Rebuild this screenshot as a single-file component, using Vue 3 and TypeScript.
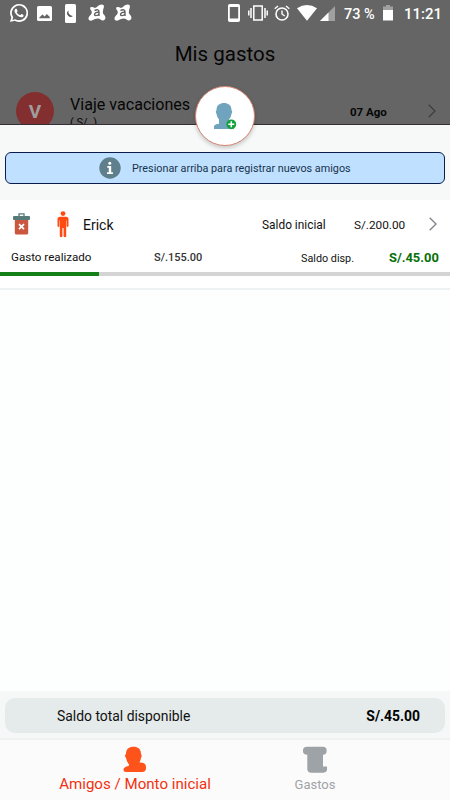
<script setup lang="ts">
interface Friend {
  name: string
  initial: string
  spent: string
  available: string
  spentPercent: number
}

const friends: Friend[] = [
  { name: 'Erick', initial: 'S/.200.00', spent: 'S/.155.00', available: 'S/.45.00', spentPercent: 22 },
]
const total = 'S/.45.00'
</script>

<template>
  <div class="screen">
    <header class="backdrop">
      <div class="status">
        <svg class="st-wa" width="18" height="18" viewBox="0 0 24 24"><path fill="#fff" d="M17.5 14.4c-.3-.15-1.76-.87-2.03-.97-.27-.1-.47-.15-.67.15s-.77.97-.94 1.16c-.17.2-.35.22-.64.08-.3-.15-1.26-.46-2.39-1.48-.88-.79-1.48-1.76-1.65-2.06-.17-.3 0-.46.13-.6.13-.14.3-.35.45-.52.15-.18.2-.3.3-.5.1-.2.05-.37-.03-.52-.07-.15-.67-1.61-.91-2.2-.24-.59-.49-.51-.67-.52h-.57c-.2 0-.52.07-.79.37S6 7.86 6 9.27s1.07 2.88 1.21 3.08c.15.2 2.1 3.2 5.08 4.49.71.3 1.26.49 1.69.62.71.23 1.36.2 1.87.12.57-.08 1.76-.72 2-1.41.25-.7.25-1.29.18-1.42-.08-.12-.27-.2-.57-.35zM12 0A12 12 0 0 0 1.7 18L0 24l6.200-1.600A12 12 0 1 0 12 0zm0 21.600a9.700 9.700 0 0 1-5-1.400l-3.700 1 1-3.600A9.700 9.700 0 1 1 12 21.600z" /></svg>
        <svg class="st-img" width="15" height="15" viewBox="0 0 15 15"><path fill="#fff" fill-rule="evenodd" d="M1.500 0h12Q15 0 15 1.500v12q0 1.500-1.500 1.500h-12Q0 15 0 13.500v-12Q0 0 1.500 0zM2.300 12.300h10.500V11L9.800 8 7.700 10.500 5.500 8.500 2.300 11.500z" /></svg>
        <svg class="st-moon" width="11" height="19" viewBox="0 0 11 19"><rect width="11" height="19" rx="1.500" fill="#fff" /><path d="M3.500 6.500A3.300 3.300 0 1 0 8 12 4.500 4.500 0 0 1 3.500 6.500z" fill="#555" /></svg>
        <svg v-for="n in 2" :key="n" class="st-av" width="18" height="18" viewBox="0 0 18 18"><path d="M7 4C9.500 3.500 10 1 12.500.7Q16 0 16 2.500C15.500 5 14.500 7 15 9.500Q18.500 13 17 15.200Q15 17.500 12.500 15.500C11 14 9 14.300 7 15C5 16 3 17.500 1 16Q-.5 14 2 11.500C4 9.500 4 8 3.500 7Q1 4 3 3Q5 2.800 7 4z" fill="#fff" /><path d="M6.500 6.500Q11 4.500 11 8V12M11 8.400C6.500 7.700 5.400 11.300 7.700 11.600Q10 11.600 11 10" fill="none" stroke="#626262" stroke-width="1.400" /></svg>
        <svg class="st-phone" width="12" height="18" viewBox="0 0 12 18"><path fill="#fff" fill-rule="evenodd" d="M1.800 0h8.400Q12 0 12 1.800v14.400q0 1.800-1.800 1.800H1.800Q0 18 0 16.200V1.800Q0 0 1.800 0zM1.800 3v11.500h8.400V3z" /></svg>
        <svg class="st-vib" width="20" height="16" viewBox="0 0 20 16"><path d="M5.800 1h8.400v14H5.800zM3 3v10M17 3v10M.8 5.500v5M19.200 5.500v5" fill="none" stroke="#fff" stroke-width="1.500" /></svg>
        <svg class="st-alarm" width="16" height="16" viewBox="0 0 16 16"><circle cx="8" cy="9" r="6" fill="none" stroke="#fff" stroke-width="1.600" /><path d="M.7 3.800 4 1M15.300 3.800 12 1M8 5.500V9l2.700 2" fill="none" stroke="#fff" stroke-width="1.400" /></svg>
        <svg class="st-wifi" width="20" height="16" viewBox="0 0 20 16"><path d="M0 3.300Q10-3.200 20 3.300L10 15.800z" fill="#fff" /></svg>
        <svg class="st-sig" width="15" height="15" viewBox="0 0 15 15"><path d="M15 0v15H0z" fill="#a0a0a0" /><path d="M8.500 6.500V15H0z" fill="#fff" /></svg>
        <span class="st-pct">73 %</span>
        <svg class="st-bat" width="10" height="16" viewBox="0 0 10 16"><path d="M0 1.500h3V0h4v1.500h3V5H0z" fill="#a0a0a0" /><path d="M0 5h10v10.500H0z" fill="#fff" /></svg>
        <span class="st-time">11:21</span>
      </div>
      <h1 class="title">Mis gastos</h1>
      <div class="trip">
        <div class="avatar">V</div>
        <div class="trip-info">
          <div class="trip-name">Viaje vacaciones</div>
          <div class="trip-sub">( S/. )</div>
        </div>
        <div class="trip-date">07 Ago</div>
        <svg class="trip-chev" width="8" height="14" viewBox="0 0 8 14"><path d="m.7.8 6.300 6.200-6.300 6.200" fill="none" stroke="#3b3d40" stroke-width="1.200" /></svg>
      </div>
    </header>

    <button class="add" aria-label="Registrar amigo">
      <svg width="26" height="28" viewBox="0 0 26 28">
        <path d="M3.500 8C3.500 3 7 1 11 1s7.500 2 7.500 7q1.500 1.500 0 4-.5 3.500-2.500 5.500V21q5 1 5 6H1v-3q1-2 5-2.300V17.500Q4 15.500 3.500 12 2 9.500 3.500 8z" fill="#6fa3be" />
        <circle cx="18.300" cy="22.300" r="4.900" fill="#12a33c" /><path d="M15.300 22.300h6M18.300 19.300v6" stroke="#fff" stroke-width="1.500" />
      </svg>
    </button>

    <section class="hint-area">
      <div class="hint">
        <svg width="22" height="22" viewBox="0 0 22 22"><circle cx="11" cy="11" r="10.700" fill="#5e7f8b" /><circle cx="10.800" cy="6.200" r="1.500" fill="#fff" /><path d="M8.300 9h3.900v6.300h1.700V17H8v-1.700h1.800v-4.600H8.300z" fill="#fff" /></svg>
        <span>Presionar arriba para registrar nuevos amigos</span>
      </div>
    </section>

    <main class="list">
      <article v-for="friend in friends" :key="friend.name" class="friend">
        <div class="row-main">
          <svg class="trash" width="17" height="22" viewBox="0 0 17 22"><path d="M6 3.500V.8h5v2.700" fill="none" stroke="#557a78" stroke-width="1.300" /><rect y="3" width="17" height="4" rx="1" fill="#557a78" /><path d="M1.800 7h13.400v13q0 1.500-1.500 1.500H3.300q-1.500 0-1.500-1.500z" fill="#cb5741" /><path d="m6 11.200 5 5m0-5-5 5" stroke="#fff" stroke-width="1.700" /></svg>
          <svg class="person" width="12" height="27" viewBox="0 0 12 27"><circle cx="6" cy="2.600" r="2.400" fill="#ff4a12" /><path d="M3 5.700h6q2.500 0 2.500 2.500v7q-.9 1.500-1.800 0V9.500h-.5v16q-1.300 1.500-2.600 0V17h-1.200v8.500q-1.300 1.500-2.600 0v-16h-.5v5.700q-.9 1.500-1.800 0v-7Q.5 5.700 3 5.700z" fill="#ff4a12" /></svg>
          <span class="name">{{ friend.name }}</span>
          <span class="initial-label">Saldo inicial</span>
          <span class="initial-value">{{ friend.initial }}</span>
          <svg class="chev" width="8" height="14" viewBox="0 0 8 14"><path d="m.7.8 6.300 6.200-6.300 6.200" fill="none" stroke="#7c8188" stroke-width="1.300" /></svg>
        </div>
        <div class="row-sub">
          <span class="spent-label">Gasto realizado</span>
          <span class="spent-value">{{ friend.spent }}</span>
          <span class="avail-label">Saldo disp.</span>
          <span class="avail-value">{{ friend.available }}</span>
        </div>
        <div class="bar"><div class="fill" :style="{ width: friend.spentPercent + '%' }"></div></div>
      </article>
    </main>

    <section class="total-area">
      <div class="total"><span class="total-label">Saldo total disponible</span><span class="total-value">{{ total }}</span></div>
    </section>

    <nav class="tabs">
      <div class="tab active">
        <svg width="24" height="27" viewBox="0 0 24 27"><path d="M3 8C3 3 6 .7 10.500.7S18 3 18 8q1.300 1.500 0 4-.5 2.500-1.500 4.500 6.500-.5 6.500 4.500v1q0 4-4 4H3q-2.500 0-2.500-2.500 0-2.500 5-3.500.8-.3.500-1.500Q3.800 16 3 12 1 9.500 3 8z" fill="#ff531c" /></svg>
        <span class="tab-friends">Amigos / Monto inicial</span>
      </div>
      <div class="tab">
        <svg width="24" height="27" viewBox="0 0 24 27"><path d="M4 .7h16q3.600 0 3.600 3.600v1.200q0 3-3.600 3.300V20.500h4.200v2.200q0 4-4 4H8.500q-4.200 0-4.200-4V8.800Q0 8.500 0 5.500V4.300Q0 .7 4 .7z" fill="#9ea3a7" /></svg>
        <span class="tab-expenses">Gastos</span>
      </div>
    </nav>
  </div>
</template>

<style>
body { margin: 0; }
</style>

<style scoped>
* { box-sizing: border-box; }
.screen { position: relative; width: 450px; height: 800px; display: flex; flex-direction: column; overflow: hidden; background: #fdfefe; font-family: Roboto, "Liberation Sans", sans-serif; color: #111; white-space: nowrap; }
svg { display: block; flex: none; }
.backdrop { height: 125px; flex: none; overflow: hidden; background: #656565; border-bottom: 1px solid #352e32; color: #050505; }
.status { height: 26px; display: flex; align-items: center; color: #fff; }
.st-wa { margin-left: 10px; }
.st-img { margin-left: 9px; }
.st-moon { margin-left: 13px; }
.st-av { margin-left: 12px; }
.st-av + .st-av { margin-left: 8px; }
.st-phone { margin-left: 96px; }
.st-vib { margin-left: 8px; }
.st-alarm { margin-left: 6px; }
.st-wifi { margin-left: 7px; }
.st-sig { margin-left: 3px; }
.st-pct { width: 40px; padding: 2px 0 0 9px; font-size: 14.500px; font-weight: 500; }
.st-bat { margin-left: 8px; }
.st-time { margin-left: 11px; padding-top: 2px; font-size: 15px; font-weight: 500; }
.title { margin: 13px 0 0; height: 29px; line-height: 30px; text-align: center; font-size: 20.500px; font-weight: 400; }
.trip { display: flex; align-items: flex-start; padding: 24px 13px 0 16px; }
.avatar { width: 38px; height: 38px; flex: none; border-radius: 50%; background: #832f2f; color: #a09c9c; text-align: center; line-height: 39px; font-size: 19px; font-weight: 700; }
.trip-info { width: 296px; flex: none; padding: 3px 0 0 16px; }
.trip-name { font-size: 16.100px; line-height: 20px; }
.trip-sub { font-size: 11px; line-height: 15px; }
.trip-date { width: 78px; flex: none; padding-top: 13px; font-size: 11.500px; line-height: 15px; font-weight: 700; }
.trip-chev { margin-top: 12px; }
.add { position: absolute; left: 195px; top: 86px; width: 60px; height: 60px; padding: 0 0 0 2px; border: 1px solid #d98472; border-radius: 50%; background: #fff; display: flex; align-items: center; justify-content: center; box-shadow: 0 2px 4px rgba(0, 0, 0, .2); }
.hint-area { height: 75px; flex: none; padding: 27px 5px 0; background: #f7f9f9; }
.hint { height: 32px; display: flex; align-items: center; gap: 11px; padding-left: 93px; border: 1px solid #0c1c4d; border-radius: 6px; background: #bfe0ff; color: #17334c; font-size: 10.800px; }
.list { flex: 1; background: #fdfefe; }
.friend { height: 90px; background: #fff; border-bottom: 2px solid #eff2f2; }
.row-main { height: 47px; padding-top: 2px; display: flex; align-items: center; }
.trash { margin: -1px 0 0 13px; }
.person { margin: -1px 0 0 27px; }
.name { width: 177px; padding-left: 14px; font-size: 14px; }
.initial-label { width: 91px; padding-left: 16px; font-size: 11.900px; }
.initial-value { width: 76px; padding-left: 17px; font-size: 11.800px; }
.chev { margin: -1px 0 0 16px; }
.row-sub { height: 25px; display: flex; align-items: center; }
.spent-label { width: 154px; padding-left: 11px; margin-top: -6px; font-size: 11.600px; }
.spent-value { width: 147px; margin-top: -5px; font-size: 11px; font-weight: 500; color: #333; }
.avail-label { width: 88px; margin-top: -3px; font-size: 10.800px; }
.avail-value { margin-top: -4px; font-size: 12.900px; font-weight: 700; color: #087008; }
.bar { height: 4px; background: #d3d4d3; }
.fill { height: 4px; background: #148018; }
.total-area { height: 47px; flex: none; padding: 7px 5px 0; background: #f6f8f8; }
.total { height: 35px; border-radius: 10px; background: #e5eaea; display: flex; align-items: center; justify-content: space-between; padding: 1px 25px 0 52px; }
.total-label { font-size: 13.900px; }
.total-value { font-size: 13.900px; font-weight: 700; color: #000; }
.tabs { height: 62px; flex: none; display: flex; padding: 0 45px; border-top: 2px solid #eff0f0; background: #fbfbfb; }
.tab { width: 180px; padding-top: 6px; display: flex; flex-direction: column; align-items: center; color: #a0a3a7; }
.tab.active { color: #f3300f; }
.tab-friends { margin-top: 1px; font-size: 15.100px; line-height: 20px; }
.tab-expenses { margin-top: 3px; font-size: 13px; line-height: 18px; }
</style>
